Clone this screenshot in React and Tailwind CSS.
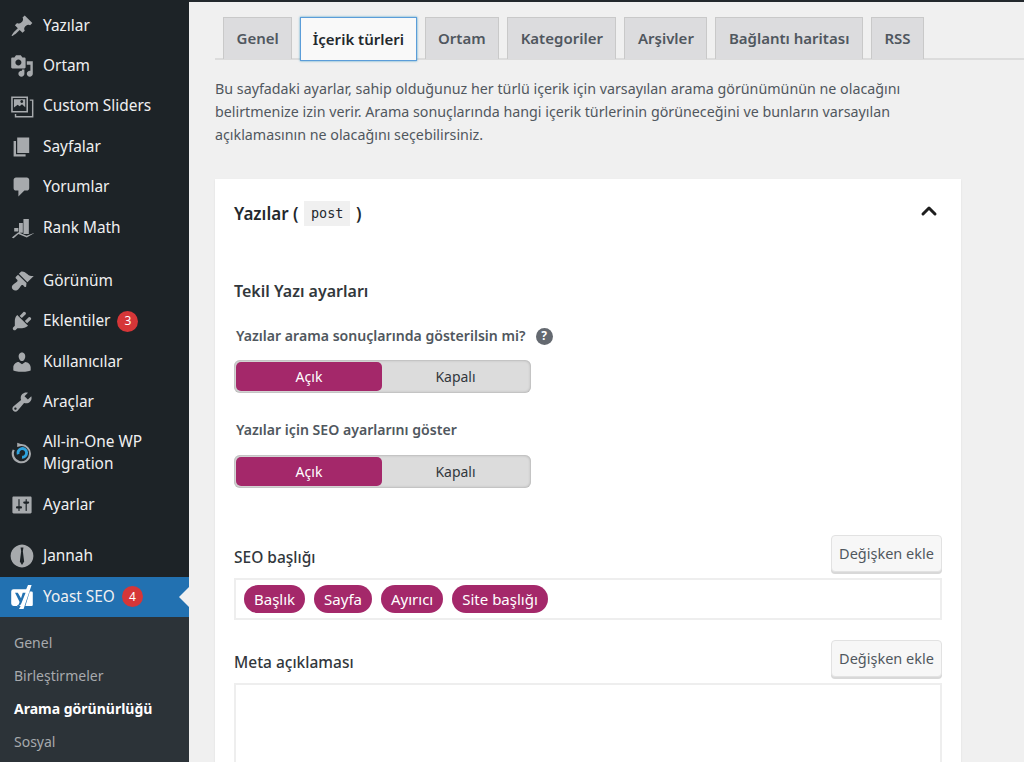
import { ChevronUp } from 'lucide-react';

const ikonlar = {
  yazilar: <path d="M10.44 3.02l1.82-1.82 6.36 6.35-1.83 1.82c-1.05-.68-2.48-.57-3.41.36l-.75.75c-.92.93-1.04 2.35-.35 3.41l-1.83 1.82-2.41-2.41-2.8 2.79c-.42.42-3.38 2.71-3.8 2.29s1.86-3.39 2.28-3.81l2.79-2.79L4.1 9.36l1.83-1.82c1.05.69 2.48.57 3.4-.36l.75-.75c.93-.92 1.05-2.35.36-3.41z" />,
  ortam: <path d="M13 11V4c0-.55-.45-1-1-1h-1.67L9 1H5L3.67 3H2c-.55 0-1 .45-1 1v7c0 .55.45 1 1 1h10c.55 0 1-.45 1-1zM7 4.5c1.38 0 2.5 1.12 2.5 2.5S8.38 9.5 7 9.5 4.5 8.38 4.5 7 5.62 4.5 7 4.5zM14 6h5v10.5c0 1.38-1.12 2.5-2.5 2.5S14 17.88 14 16.5s1.12-2.5 2.5-2.5c.17 0 .34.02.5.05V9h-3V6zm-4 8.05V13h2v3.5c0 1.38-1.12 2.5-2.5 2.5S7 17.88 7 16.5 8.12 14 9.5 14c.17 0 .34.02.5.05z" />,
  slider: <path fillRule="evenodd" d="M1 2h14v13.500H1zM2.300 3.300v10.900h11.400V3.300zM3.300 4.300h9.400v6.800l-2.700-2.600-2 1.800-1.600-1.300-3.100 2.300zM9.800 5a1.200 1.200 0 1 0 .01 0zM16.500 4.500h3v15H4v-2.800h1.200v1.600h13.100V5.700h-1.800z" />,
  sayfa: <path d="M6 15V2h10v13H6zm-1 1h8v2H3V5h2v11z" />,
  yorum: <path d="M5 2h9c1.100 0 2 .9 2 2v7c0 1.100-.9 2-2 2h-2l-5 5v-5H5c-1.100 0-2-.9-2-2V4c0-1.100.9-2 2-2z" />,
  rank: <path d="M3.500 10h3.500v3H3.500zM7.500 5.800h3.200v8.200H7.500zM11.200 2.500h4.500v12.500h-4.500zM1.500 18l5.500-4.500 6.800 3 6.700-2.500-6.500 4-7-3-4 3.500z" />,
  gorunum: <path d="M14.480 11.060L7.410 3.990l1.500-1.500c.5-.56 2.300-.47 3.510.32 1.210.8 1.430 1.280 2.910 2.100 1.180.64 2.450 1.260 4.450.85zm-.71.71L6.700 4.700 4.930 6.470c-.39.39-.39 1.020 0 1.410l1.060 1.060c.39.39.39 1.030 0 1.420-.6.6-1.430 1.110-2.210 1.690-.35.26-.7.53-1.010.84C1.430 13.710.96 15.650 2.410 17.100s3.380.98 4.610-.25c.31-.31.58-.66.84-1.010.58-.78 1.090-1.610 1.690-2.210.39-.39 1.020-.39 1.410 0l1.060 1.060c.39.39 1.020.39 1.410 0z" />,
  eklenti: <path d="M13.110 4.360L9.870 7.600 8 5.730l3.240-3.240c.35-.34 1.050-.2 1.560.32.52.51.66 1.210.31 1.550zm-8 1.770l.91-1.120 9.010 9.010-1.190.84c-.71.71-2.630 1.160-3.820 1.160H6.140L4.900 17.260c-.59.59-1.540.59-2.120 0-.59-.58-.59-1.530 0-2.120l1.240-1.240v-3.880c0-1.130.4-3.190 1.090-3.890zm7.260 3.970l3.240-3.240c.34-.35 1.040-.21 1.550.31.52.51.66 1.210.31 1.550l-3.240 3.250z" />,
  kullanici: <path d="M10 9.250c-2.270 0-2.730-3.440-2.730-3.440C7 4.020 7.820 2 9.970 2c2.160 0 2.980 2.020 2.710 3.810 0 0-.41 3.440-2.680 3.440zm0 2.570L12.720 10c2.390 0 4.520 2.330 4.520 4.530v2.490s-3.650 1.130-7.240 1.130c-3.650 0-7.240-1.130-7.240-1.130v-2.490c0-2.250 1.940-4.480 4.470-4.480z" />,
  arac: <path d="M16.680 9.770c-1.340 1.340-3.300 1.670-4.950.99l-5.410 6.520c-.99.99-2.590.99-3.580 0s-.99-2.590 0-3.570l6.520-5.420c-.68-1.650-.35-3.610.99-4.950 1.280-1.280 3.120-1.620 4.720-1.060l-2.890 2.890 2.820 2.820 2.860-2.870c.53 1.580.18 3.390-1.080 4.650zM3.810 16.210c.4.39 1.040.39 1.430 0 .4-.4.4-1.040 0-1.430-.39-.4-1.030-.4-1.430 0-.39.39-.39 1.030 0 1.430z" />,
  ayar: <path d="M18 16V4c0-.55-.45-1-1-1H3c-.55 0-1 .45-1 1v12c0 .55.45 1 1 1h14c.55 0 1-.45 1-1zM8 11h1c.55 0 1 .45 1 1s-.45 1-1 1H8v1.500c0 .28-.22.5-.5.5s-.5-.22-.5-.5V13H6c-.55 0-1-.45-1-1s.45-1 1-1h1V5.500c0-.28.22-.5.5-.5s.5.22.5.5V11zm5-2h-1c-.55 0-1-.45-1-1s.45-1 1-1h1V5.500c0-.28.22-.5.5-.5s.5.22.5.5V7h1c.55 0 1 .45 1 1s-.45 1-1 1h-1v5.500c0 .28-.22.5-.5.5s-.5-.22-.5-.5V9z" />,
  migration: (
    <>
      <path d="M6 1.500l3 1.100A8 8 0 1 1 2.300 7l1.600.7A6.300 6.300 0 1 0 8.500 4.300L6 5z" />
      <path d="M6.800 11A3.600 3.600 0 1 1 10 13.500" fill="none" stroke="#2ea2dc" strokeWidth="2.400" />
    </>
  ),
  jannah: (
    <path fillRule="evenodd" d="M10 0.500a9.500 9.500 0 1 0 .01 0zM8.800 3h2.400l-.5 3 1.100 8.500L10 17.500l-1.800-3L9.300 6z" />
  ),
  yoast: (
    <path fillRule="evenodd" fill="#fff" d="M3 3.500h10.500L15 0h3l-5.500 16.500-1.200 3.500H7.500l1.400-2.500H3a2 2 0 0 1-2-2v-10a2 2 0 0 1 2-2zM6.500 6.500H4.200L8 14.200 7.300 16c-.2.5-.6.8-1.300.8v1c1.800 0 2.800-.8 3.500-2.500L13 6.500h-2.400L9.200 11zM16.500 5.500H18a1 1 0 0 1 1 1v10a1 1 0 0 1-1 1h-5.200z" />
  ),
};

function MenuOgesi({ ikon, children, sayi, cokSatir }) {
  return (
    <div className={`flex items-center text-[#f0f0f1] ${cokSatir ? 'h-[62px]' : 'h-[40.4px]'}`}>
      <div className="w-[43px] shrink-0 flex justify-center">
        <svg viewBox="0 0 20 20" className="w-[24px] h-[24px] fill-[#a7aaad]">{ikonlar[ikon]}</svg>
      </div>
      <span className="text-[15.400px] leading-[22px]">{children}</span>
      {sayi && <span className="ml-[7px] w-[21px] h-[21px] rounded-full bg-[#d63638] text-white text-[12px] flex items-center justify-center">{sayi}</span>}
    </div>
  );
}

function Sekme({ children, aktif }) {
  if (aktif) {
    return <div className="h-[44px] -mb-px px-[11.500px] flex items-center bg-[#f9f9f9] border border-[#5b9dd9] shadow-[0_0_2px_rgba(30,140,190,0.8)] text-[15px] font-semibold text-[#23282d]">{children}</div>;
  }
  return <div className="h-[42px] px-[12.500px] flex items-center bg-[#dcdcde] border border-b-0 border-[#c9c9c9] text-[15px] font-semibold text-[#50575e]">{children}</div>;
}

function Anahtar() {
  return (
    <div className="w-[297px] h-[33px] rounded-[6px] bg-[#dcdcdc] p-[2px] flex shadow-[inset_0_0_3px_rgba(0,0,0,0.3)]">
      <div className="w-[146px] rounded-[5px] bg-[#a4286a] text-white text-[14px] flex items-center justify-center">Açık</div>
      <div className="flex-1 text-[#32373c] text-[14px] flex items-center justify-center">Kapalı</div>
    </div>
  );
}

function DegiskenButon() {
  return <div className="w-[111px] h-[37px] rounded-[4px] bg-[#f7f7f7] border border-[#e2e2e2] shadow-[0_2px_0_#d8d8d8] text-[14.500px] text-[#50575e] flex items-center justify-center">Değişken ekle</div>;
}

function Cip({ children }) {
  return <span className="h-[28px] px-[10px] rounded-full bg-[#a4286a] text-white text-[15px] flex items-center">{children}</span>;
}

export default function App() {
  return (
    <div className="w-[1024px] h-[762px] overflow-hidden flex bg-[#f0f0f0] font-['Noto_Sans','Open_Sans',sans-serif]">
      <aside className="w-[189px] shrink-0 bg-[#1d2327] pt-[5.500px] flex flex-col">
        <MenuOgesi ikon="yazilar">Yazılar</MenuOgesi>
        <MenuOgesi ikon="ortam">Ortam</MenuOgesi>
        <MenuOgesi ikon="slider">Custom Sliders</MenuOgesi>
        <MenuOgesi ikon="sayfa">Sayfalar</MenuOgesi>
        <MenuOgesi ikon="yorum">Yorumlar</MenuOgesi>
        <MenuOgesi ikon="rank">Rank Math</MenuOgesi>
        <div className="h-[13px]" />
        <MenuOgesi ikon="gorunum">Görünüm</MenuOgesi>
        <MenuOgesi ikon="eklenti" sayi="3">Eklentiler</MenuOgesi>
        <MenuOgesi ikon="kullanici">Kullanıcılar</MenuOgesi>
        <MenuOgesi ikon="arac">Araçlar</MenuOgesi>
        <MenuOgesi ikon="migration" cokSatir>All-in-One WP<br />Migration</MenuOgesi>
        <MenuOgesi ikon="ayar">Ayarlar</MenuOgesi>
        <div className="h-[11.500px]" />
        <MenuOgesi ikon="jannah">Jannah</MenuOgesi>
        <div className="relative bg-[#2271b1]">
          <MenuOgesi ikon="yoast" sayi="4">Yoast SEO</MenuOgesi>
          <div className="absolute right-0 top-[10px] border-y-[10px] border-y-transparent border-r-[10px] border-r-[#f0f0f1]" />
        </div>
        <div className="flex-1 bg-[#2c3338] pt-[9px] pl-[14px] text-[14px] text-[#a7aaad]">
          <div className="h-[33px] flex items-center">Genel</div>
          <div className="h-[33px] flex items-center">Birleştirmeler</div>
          <div className="h-[33px] flex items-center font-bold text-white">Arama görünürlüğü</div>
          <div className="h-[33px] flex items-center">Sosyal</div>
        </div>
      </aside>

      <main className="flex-1 min-w-0">
        <div className="h-[2px] bg-[#23282d]" />
        <div className="ml-[26px]">
          <div className="mt-[15px] h-[43px] pl-[8px] flex items-start gap-[8px] border-b-2 border-[#dcdcdc]">
            <Sekme>Genel</Sekme>
            <Sekme aktif>İçerik türleri</Sekme>
            <Sekme>Ortam</Sekme>
            <Sekme>Kategoriler</Sekme>
            <Sekme>Arşivler</Sekme>
            <Sekme>Bağlantı haritası</Sekme>
            <Sekme>RSS</Sekme>
          </div>
          <p className="mt-[17px] w-[710px] text-[14.270px] leading-[23px] text-[#50575e]">
            Bu sayfadaki ayarlar, sahip olduğunuz her türlü içerik için varsayılan arama görünümünün ne olacağını belirtmenize izin verir. Arama sonuçlarında hangi içerik türlerinin görüneceğini ve bunların varsayılan açıklamasının ne olacağını seçebilirsiniz.
          </p>
          <section className="mt-[33px] w-[746px] h-[600px] bg-white px-[19px] shadow-[0_1px_2px_rgba(0,0,0,0.08)]">
            <div className="h-[65px] pt-[4px] flex items-center justify-between">
              <h2 className="flex items-center text-[17px] font-semibold text-[#23282d]">
                Yazılar (
                <code className="mx-[6px] px-[6.500px] h-[25px] flex items-center bg-[#f0f0f0] text-[13.500px] font-normal font-['DejaVu_Sans_Mono',monospace]">post</code>
                )
              </h2>
              <ChevronUp className="w-[24px] h-[24px] mr-[1px] text-[#1e1e1e] -mt-[5px]" strokeWidth={3} />
            </div>
            <h3 className="mt-[35px] text-[16px] leading-[24px] font-semibold text-[#32373c]">Tekil Yazı ayarları</h3>
            <div className="mt-[21px] ml-[2px] h-[24px] flex items-center text-[14.100px] font-semibold text-[#50575e]">
              Yazılar arama sonuçlarında gösterilsin mi?
              <span className="ml-[10px] w-[17px] h-[17px] rounded-full bg-[#646970] text-white text-[12px] font-bold flex items-center justify-center">?</span>
            </div>
            <div className="mt-[12px]"><Anahtar /></div>
            <div className="mt-[25px] ml-[2px] h-[24px] flex items-center text-[14.100px] font-semibold text-[#50575e]">Yazılar için SEO ayarlarını göster</div>
            <div className="mt-[13px]"><Anahtar /></div>
            <div className="mt-[47px] flex items-end justify-between">
              <span className="text-[15.500px] leading-[24px] font-medium text-[#32373c] mb-[3px]">SEO başlığı</span>
              <DegiskenButon />
            </div>
            <div className="mt-[6px] h-[42px] border-2 border-[#eeeeee] px-[8px] flex items-center gap-[9px]">
              <Cip>Başlık</Cip>
              <Cip>Sayfa</Cip>
              <Cip>Ayırıcı</Cip>
              <Cip>Site başlığı</Cip>
            </div>
            <div className="mt-[20px] flex items-end justify-between">
              <span className="text-[15.500px] leading-[24px] font-medium text-[#32373c] mb-[3px]">Meta açıklaması</span>
              <DegiskenButon />
            </div>
            <div className="mt-[6px] h-[150px] border-2 border-[#eeeeee]" />
          </section>
        </div>
      </main>
    </div>
  );
}
